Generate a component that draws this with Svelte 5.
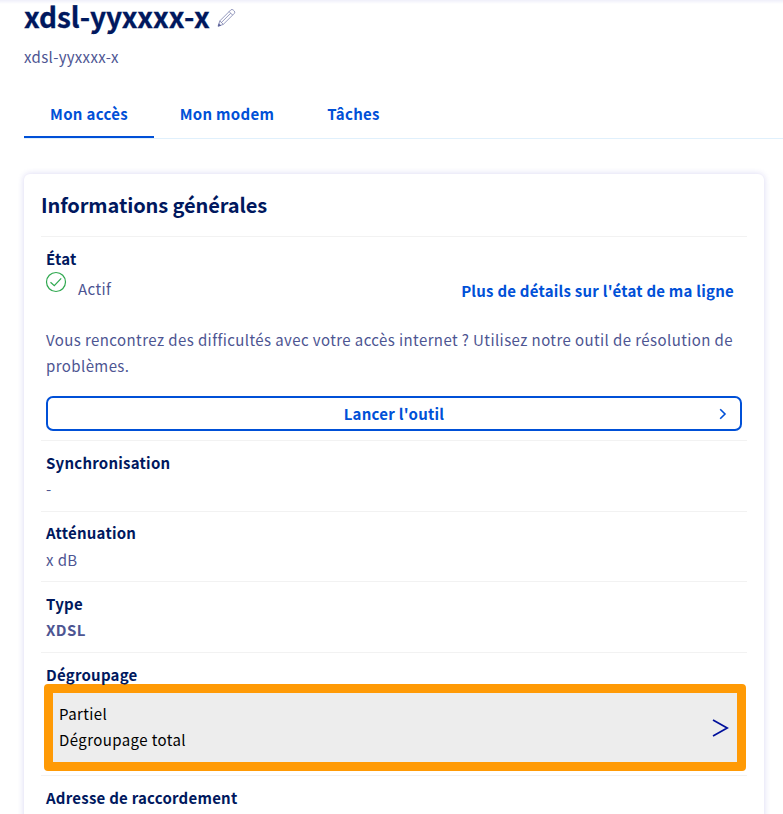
<script>
  const tabs = [
    { label: 'Mon accès', width: 130, active: true },
    { label: 'Mon modem', width: 146, active: false },
    { label: 'Tâches', width: 107, active: false }
  ];
  const facts = [
    { name: 'Synchronisation', value: '-', kind: 'sync' },
    { name: 'Atténuation', value: 'x dB', kind: 'loss' },
    { name: 'Type', value: 'XDSL', kind: 'type' }
  ];
</script>

<div class="page">
  <header>
    <h1>xdsl-yyxxxx-x</h1>
    <svg class="pencil" width="20" height="20" viewBox="0 0 20 20" fill="none" stroke="#5c639b" stroke-width="0.65" stroke-linejoin="round">
      <path d="M1.2 18.2 2.8 12.9 13.8 1.9Q15 .9 16.2 2L17.3 3.1Q18.3 4.2 17.3 5.4L6.3 16.4ZM2.8 12.9 6.3 16.4M12.1 3.6 15.6 7.1M4.4 14.5 13.6 5.3" />
      <path d="M1.2 18.2 1.9 15.7 3.7 17.4Z" fill="#4d5592" />
    </svg>
  </header>
  <p class="subtitle">xdsl-yyxxxx-x</p>

  <nav>
    {#each tabs as tab}
      <a class:active={tab.active} style="width: {tab.width}px"><span>{tab.label}</span></a>
    {/each}
  </nav>

  <section class="card">
    <h2>Informations générales</h2>

    <div class="row state">
      <h3>État</h3>
      <div class="status">
        <svg width="22" height="22" viewBox="0 0 22 22" fill="none" stroke="#2fa84f" stroke-width="1.2">
          <circle cx="11" cy="11" r="9.5" />
          <path d="M5.5 11.2 9.3 14.7 16.2 7.4" />
        </svg>
        <span class="actif">Actif</span>
        <a class="details">Plus de détails sur l'état de ma ligne</a>
      </div>
      <p class="help">Vous rencontrez des difficultés avec votre accès internet ? Utilisez notre outil de résolution de<br />problèmes.</p>
      <button>
        <span class="launch">Lancer l'outil</span>
        <svg width="8" height="12" viewBox="0 0 8 12" fill="none" stroke="#0050d7" stroke-width="1.6"><path d="M1.2 1.2 6 6 1.2 10.8" /></svg>
      </button>
    </div>

    {#each facts as fact}
      <div class="row fact {fact.kind}">
        <h3>{fact.name}</h3>
        <p>{fact.value}</p>
      </div>
    {/each}

    <div class="row unbundling">
      <h3>Dégroupage</h3>
      <div class="highlight">
        <div class="choices">
          <p>Partiel</p>
          <p>Dégroupage total</p>
        </div>
        <svg width="18" height="20" viewBox="0 0 18 20" fill="none" stroke="#00109c" stroke-width="1.7"><path d="M1 2 15.2 10 1 18" /></svg>
      </div>
    </div>

    <div class="row address">
      <h3>Adresse de raccordement</h3>
    </div>
  </section>
</div>

<style>
  :global(body) { margin: 0; background: #fff; }
  .page {
    box-sizing: border-box;
    width: 783px;
    height: 814px;
    overflow: hidden;
    padding-left: 24px;
    background: linear-gradient(#efeffa, #fff 4px);
    font-family: "Noto Sans CJK SC", "Open Sans", sans-serif;
    font-size: 15px;
    letter-spacing: 0.41px;
    line-height: 26px;
    color: #4d5592;
    white-space: nowrap;
  }
  h1, h2, h3, p { margin: 0; }
  header { display: flex; height: 44px; }
  h1 {
    width: 193px;
    font-size: 28px;
    line-height: 32px;
    letter-spacing: 0;
    font-weight: 700;
    color: #00185e;
    -webkit-text-stroke: 0.3px #00185e;
  }
  .pencil { margin-top: 8px; }
  .subtitle { height: 48px; letter-spacing: 0.34px; }
  nav { display: flex; height: 46px; border-bottom: 1px solid #e0f0fc; }
  nav a {
    box-sizing: border-box;
    height: 46px;
    padding-top: 9px;
    text-align: center;
    color: #0050d7;
    font-weight: 700;
    letter-spacing: 0.3px;
  }
  nav a.active { border-bottom: 2px solid #0050d7; }
  .card {
    box-sizing: border-box;
    width: 740px;
    height: 700px;
    margin-top: 35px;
    padding: 0 17px;
    border-radius: 6px;
    background: #fff;
    box-shadow: 0 0 6px rgba(60, 50, 190, 0.2);
  }
  h2 { height: 62px; line-height: 62px; font-size: 20px; letter-spacing: -0.1px; color: #00185e; }
  h3 { height: 26px; font-size: 15px; line-height: 28px; letter-spacing: 0.23px; color: #00185e; font-weight: 700; }
  .row { box-sizing: border-box; border-top: 1px solid #f2f2f2; padding: 8px 5px 0; }
  .state { height: 204px; }
  .status { display: flex; height: 30px; }
  .status svg { margin-left: -1px; }
  .actif { margin: 5px 0 0 11px; }
  .details { margin: 7px 8px 0 auto; color: #0050d7; font-weight: 700; letter-spacing: 0.23px; }
  .help { margin-top: 26px; }
  button {
    display: flex;
    align-items: center;
    box-sizing: border-box;
    width: 696px;
    height: 35px;
    margin-top: 17px;
    padding: 0 13px 0 21px;
    border: 2px solid #0050d7;
    border-radius: 7px;
    background: #fff;
    color: #0050d7;
    font: inherit;
    font-weight: 700;
    letter-spacing: 0.25px;
  }
  .launch { flex: 1; text-align: center; }
  .fact { height: 71px; }
  .fact p { margin-top: 1px; }
  .loss { height: 70px; padding-top: 7px; }
  .loss p { margin-top: 2px; }
  .type p { font-weight: 700; }
  .unbundling { height: 123px; }
  .highlight {
    display: flex;
    align-items: center;
    justify-content: space-between;
    box-sizing: border-box;
    width: 702px;
    height: 87px;
    margin: -3px 0 0 -2px;
    padding: 0 7px 0 6px;
    border: 9px solid #ff9a05;
    border-radius: 4px;
    background: #ededed;
    color: #000;
  }
  .choices { padding-bottom: 1px; }
</style>
